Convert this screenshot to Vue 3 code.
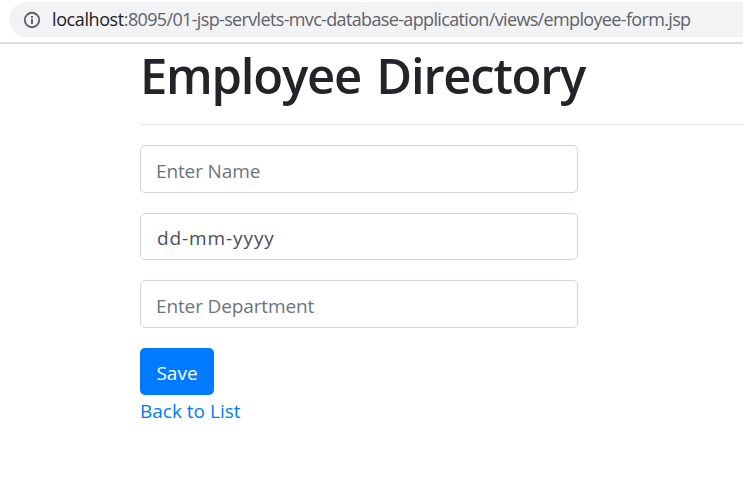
<script setup>
import { ref } from 'vue'

const name = ref('')
const birthDate = ref('')
const department = ref('')
</script>

<template>
  <div class="window">
    <header class="toolbar">
      <div class="address">
        <svg class="info" viewBox="0 0 18 18" width="18" height="18">
          <circle cx="9" cy="9" r="7.2" fill="none" stroke="#5f6368" stroke-width="1.9" />
          <rect x="8" y="8" width="2" height="5" fill="#5f6368" />
          <rect x="8" y="5" width="2" height="2" fill="#5f6368" />
        </svg>
        <span class="url"><span class="host">localhost</span>:8095/01-jsp-servlets-mvc-database-application/views/employee-form.jsp</span>
      </div>
    </header>
    <main class="container">
      <h1>Employee Directory</h1>
      <hr />
      <form @submit.prevent>
        <input v-model="name" class="control name" placeholder="Enter Name" />
        <input v-model="birthDate" class="control date" placeholder="dd-mm-yyyy" />
        <input v-model="department" class="control department" placeholder="Enter Department" />
        <button type="submit">Save</button>
      </form>
      <a href="#">Back to List</a>
    </main>
  </div>
</template>

<style>
body {
  margin: 0;
  background: #fff;
  overflow: hidden;
}
</style>

<style scoped>
.window {
  width: 743px;
  height: 477px;
  overflow: hidden;
  box-sizing: border-box;
  font-family: "Open Sans", "Noto Sans", sans-serif;
  font-size: 19px;
  font-weight: 370;
  color: #212529;
}
.toolbar {
  box-sizing: border-box;
  height: 44px;
  padding: 2px 0 0 9px;
  border-bottom: 2px solid #dadce0;
}
.address {
  display: flex;
  align-items: center;
  height: 35px;
  padding-left: 14px;
  border-radius: 18px 0 0 18px;
  background: #f1f3f4;
}
.info {
  flex: none;
  margin-right: 11px;
}
.url {
  font-size: 18px;
  line-height: 35px;
  letter-spacing: -0.65px;
  white-space: nowrap;
  color: #5f6368;
}
.host {
  letter-spacing: -0.4px;
  color: #202124;
}
.container {
  padding-left: 140px;
}
h1 {
  margin: 0;
  height: 61px;
  padding-top: 1px;
  font-size: 49px;
  line-height: 60px;
  font-weight: 600;
  letter-spacing: -1.25px;
  word-spacing: 4px;
  white-space: nowrap;
}
hr {
  margin: 18px 0 20px;
  border: 0;
  border-top: 1px solid #e3e4e5;
}
form {
  display: flex;
  flex-direction: column;
  align-items: flex-start;
}
.control {
  box-sizing: border-box;
  width: 438px;
  height: 48px;
  margin: 0 0 20px;
  padding: 4px 15px 0;
  border: 1px solid #ced4da;
  border-radius: 5px;
  background: #fff;
  font: inherit;
  letter-spacing: -0.13px;
  color: #495057;
  outline: none;
}
.control::placeholder {
  color: #6c757d;
  opacity: 1;
}
.date {
  height: 47px;
  padding: 2px 15px 0 16px;
  letter-spacing: 0.9px;
}
.date::placeholder {
  color: #495057;
}
button {
  width: 74px;
  height: 47px;
  padding: 3px 0 0;
  border: 0;
  border-radius: 5px;
  background: #007bff;
  font: inherit;
  color: #fff;
}
a {
  display: block;
  padding-top: 1px;
  line-height: 30px;
  color: #007bff;
  text-decoration: none;
}
</style>
